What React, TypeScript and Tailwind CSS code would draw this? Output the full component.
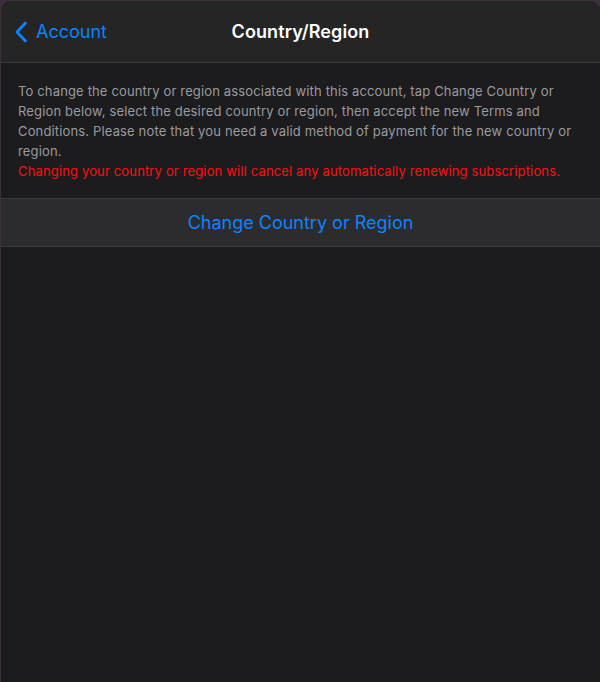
export default function App() {
  return (
    <div className="h-[682px] w-[600px] overflow-hidden bg-[#3a2f3a] pl-[1px] pt-[1px]" style={{ fontFamily: "Inter, 'Noto Sans', sans-serif" }}>
      <div className="flex h-full flex-col overflow-hidden rounded-t-[10px] bg-[#1c1c1e]">
        <header className="relative flex h-[62px] items-center border-b border-[#3a3a3c] bg-[#252526] px-[13px]">
          <div className="flex items-center gap-[8px] text-[#0a84ff]">
            <svg width="14" height="22" viewBox="0 0 14 22" fill="none">
              <path d="M11.5 2 L3 11 L11.5 20" stroke="currentColor" strokeWidth="2.8" strokeLinecap="round" strokeLinejoin="round" />
            </svg>
            <span className="text-[18px] leading-none">Account</span>
          </div>
          <h1 className="absolute left-1/2 -translate-x-1/2 text-[18px] font-semibold leading-none tracking-[0.1px] text-white">Country/Region</h1>
        </header>
        <div className="px-[17px] pt-[18px] pb-[17px] text-[13px] leading-[20px] tracking-[0.15px]">
          <p className="text-[#9a9a9f]">
            To change the country or region associated with this account, tap Change Country or Region below, select the desired country or region, then accept the new Terms and Conditions. Please note that you need a valid method of payment for the new country or region.
          </p>
          <p className="text-[#ff0d0d]">Changing your country or region will cancel any automatically renewing subscriptions.</p>
        </div>
        <button className="flex h-[49px] items-center justify-center border-y border-[#3a3a3c] bg-[#2c2c2e] text-[18px] text-[#0a84ff]">
          Change Country or Region
        </button>
      </div>
    </div>
  );
}
